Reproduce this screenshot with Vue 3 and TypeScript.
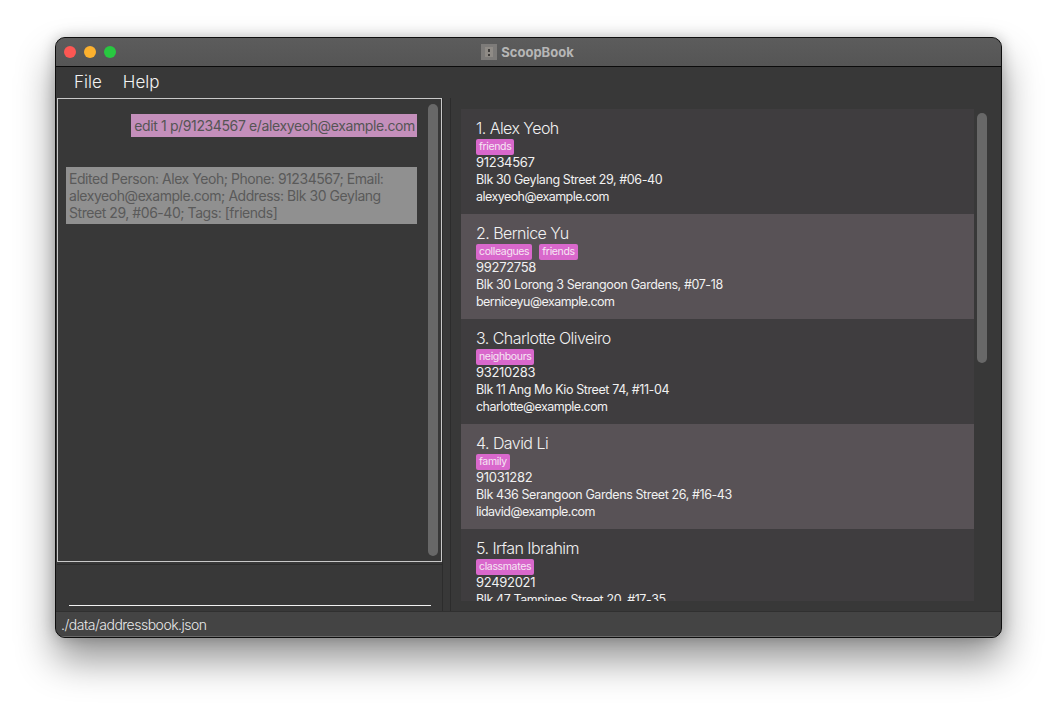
<script setup lang="ts">
interface Person { name: string; tags: string[]; phone: string; address: string; email: string }
const people: Person[] = [
  { name: '1. Alex Yeoh', tags: ['friends'], phone: '91234567', address: 'Blk 30 Geylang Street 29, #06-40', email: 'alexyeoh@example.com' },
  { name: '2. Bernice Yu', tags: ['colleagues', 'friends'], phone: '99272758', address: 'Blk 30 Lorong 3 Serangoon Gardens, #07-18', email: 'berniceyu@example.com' },
  { name: '3. Charlotte Oliveiro', tags: ['neighbours'], phone: '93210283', address: 'Blk 11 Ang Mo Kio Street 74, #11-04', email: 'charlotte@example.com' },
  { name: '4. David Li', tags: ['family'], phone: '91031282', address: 'Blk 436 Serangoon Gardens Street 26, #16-43', email: 'lidavid@example.com' },
  { name: '5. Irfan Ibrahim', tags: ['classmates'], phone: '92492021', address: 'Blk 47 Tampines Street 20, #17-35', email: 'irfan@example.com' },
]
</script>

<template>
  <div class="page">
    <div class="window">
      <header class="titlebar">
        <div class="lights">
          <span class="light red"></span>
          <span class="light amber"></span>
          <span class="light green"></span>
        </div>
        <div class="title">
          <svg class="app-icon" width="16" height="16" viewBox="0 0 16 16">
            <rect width="16" height="16" fill="#7d7b79" />
            <rect x="4" y="3" width="8" height="10" fill="#8f8b86" />
            <rect x="7" y="5" width="2" height="3" fill="#3f3d3b" />
            <rect x="7" y="10" width="2" height="2" fill="#3f3d3b" />
          </svg>
          <span>ScoopBook</span>
        </div>
      </header>
      <nav class="menubar">
        <span>File</span>
        <span>Help</span>
      </nav>
      <main class="content">
        <section class="left">
          <div class="chat">
            <div class="chat-scroll">
              <div class="bubble-row">
                <div class="bubble user">edit 1 p/91234567 e/alexyeoh@example.com</div>
              </div>
              <div class="bubble reply">Edited Person: Alex Yeoh; Phone: 91234567; Email: alexyeoh@example.com; Address: Blk 30 Geylang Street 29, #06-40; Tags: [friends]</div>
            </div>
            <div class="track chat-track"><div class="thumb chat-thumb"></div></div>
          </div>
          <div class="command">
            <div class="command-line"></div>
          </div>
        </section>
        <section class="right">
          <div class="list">
            <article v-for="(p, i) in people" :key="p.name" class="card" :class="{ alt: i % 2 === 1 }">
              <div class="name">{{ p.name }}</div>
              <div class="tags"><span v-for="t in p.tags" :key="t" class="tag">{{ t }}</span></div>
              <div class="line phone">{{ p.phone }}</div>
              <div class="line">{{ p.address }}</div>
              <div class="line email">{{ p.email }}</div>
            </article>
          </div>
          <div class="track list-track"><div class="thumb list-thumb"></div></div>
        </section>
      </main>
      <footer class="status">./data/addressbook.json</footer>
    </div>
  </div>
</template>

<style>
html, body { margin: 0; background: #fff; overflow: hidden; }
</style>

<style scoped>
.page {
  width: 1057px;
  height: 712px;
  padding: 37px 55px 74px;
  box-sizing: border-box;
  font-family: Inter, "Liberation Sans", sans-serif;
}
.window {
  width: 947px;
  height: 601px;
  box-sizing: border-box;
  display: flex;
  flex-direction: column;
  border: 1px solid #0e0e0e;
  border-radius: 10px;
  overflow: hidden;
  background: #383838;
  box-shadow: 0 22px 38px rgba(0, 0, 0, 0.42), 0 0 14px rgba(0, 0, 0, 0.22);
}
.titlebar {
  height: 29px;
  flex: none;
  box-sizing: border-box;
  position: relative;
  display: flex;
  align-items: center;
  justify-content: center;
  background: linear-gradient(#5c5c5c, #555555);
  border-bottom: 1px solid #0b0b0b;
}
.lights {
  position: absolute;
  left: 8px;
  top: 8px;
  display: flex;
  gap: 8px;
}
.light { width: 12px; height: 12px; border-radius: 50%; }
.red { background: #fc5753; }
.amber { background: #fdb12e; }
.green { background: #28c840; }
.title {
  display: flex;
  align-items: center;
  gap: 4px;
  font-size: 13px;
  font-weight: 700;
  color: #b6b6b6;
  margin-left: -2px;
  margin-bottom: 1px;
}
.menubar {
  height: 31px;
  flex: none;
  box-sizing: border-box;
  display: flex;
  align-items: center;
  gap: 21px;
  padding: 0 0 1px 18px;
  font-size: 17px;
  font-weight: 300;
  color: #f2f2f2;
  background: #383838;
}
.content {
  flex: 1;
  min-height: 0;
  display: flex;
  background: #383838;
}
.left {
  width: 387px;
  flex: none;
  padding-left: 1px;
  box-sizing: border-box;
  display: flex;
  flex-direction: column;
  border-right: 1px solid #2c2c2c;
}
.chat {
  height: 464px;
  flex: none;
  box-sizing: border-box;
  border: 1px solid #c9c9c9;
  display: flex;
  position: relative;
}
.chat-scroll { flex: 1; min-width: 0; padding: 15px 11px 0 8px; }
.bubble-row { display: flex; justify-content: flex-end; }
.bubble { font-size: 14px; line-height: 17px; color: #555; letter-spacing: -0.45px; }
.user { background: #c48fbb; height: 23px; line-height: 23px; padding: 0 2px 0 3px; box-sizing: border-box; letter-spacing: -0.38px; }
.reply {
  margin: 30px 0 0 0;
  background: #909090;
  color: #5a5a5a;
  padding: 3px;
  height: 57px;
  box-sizing: border-box;
}
.track { width: 10px; flex: none; position: relative; }
.chat-track { margin-right: 3px; }
.thumb { position: absolute; width: 10px; border-radius: 5px; background: #686868; left: 0; }
.chat-thumb { top: 5px; bottom: 5px; }
.command {
  flex: 1;
  box-sizing: border-box;
  border-top: 1px solid #2c2c2c;
  margin-top: 2px;
  padding: 40px 10px 0 12px;
}
.command-line { height: 1px; background: #f2f2f2; margin-right: 1px; }
.right {
  flex: 1;
  min-width: 0;
  margin-left: 7px;
  border-left: 1px solid #2c2c2c;
  display: flex;
  padding: 11px 0 9px 10px;
  overflow: hidden;
}
.list {
  width: 513px;
  flex: none;
  height: 492px;
  overflow: hidden;
  background: #3f3d3f;
}
.card {
  height: 105px;
  box-sizing: border-box;
  padding: 9px 15px 0;
  background: #3f3d3f;
  color: #f1f1f1;
}
.card.alt { background: #585256; }
.name { font-size: 16px; line-height: 20px; letter-spacing: -0.55px; height: 21px; font-weight: 300; }
.tags { display: flex; gap: 7px; height: 15px; align-items: flex-start; }
.tag {
  background: #d968cc;
  color: #f6e6f3;
  font-size: 10.5px;
  line-height: 16px;
  height: 16px;
  flex: none;
  padding: 0 3px;
  border-radius: 2px;
  letter-spacing: -0.35px;
}
.line { font-size: 12.5px; line-height: 17px; height: 17px; letter-spacing: -0.4px; }
.phone { font-size: 13px; letter-spacing: -0.3px; }
.email { letter-spacing: -0.55px; }
.list-track { margin-left: 3px; }
.list-thumb { top: 4px; height: 250px; }
.status {
  height: 26px;
  flex: none;
  box-sizing: border-box;
  padding: 2px 0 0 5px;
  border-top: 1px solid #303030;
  border-bottom: 1px solid #6a6a6a;
  background: #444444;
  color: #e8e8e8;
  font-size: 14px;
  line-height: 22px;
  font-weight: 300;
  letter-spacing: -0.5px;
}
</style>
